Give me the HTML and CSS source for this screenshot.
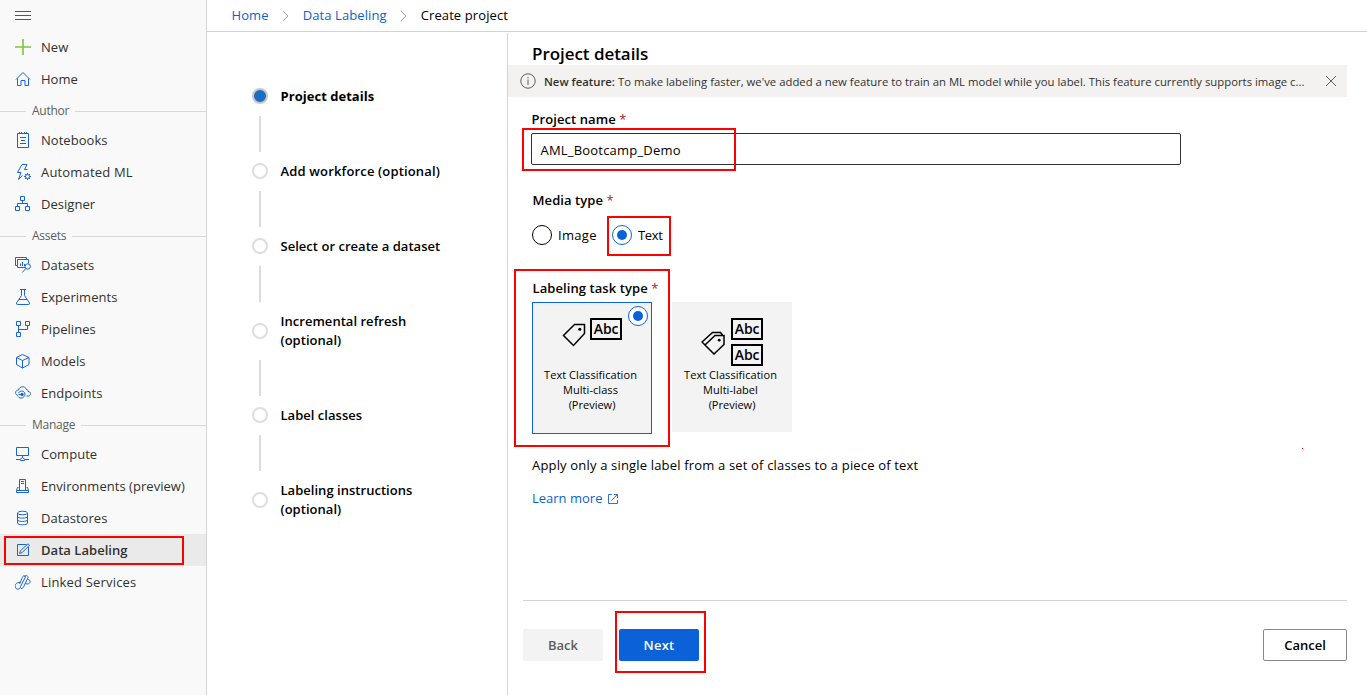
FILE: index.html
```html
<!DOCTYPE html>
<html lang="en">
<head>
<meta charset="utf-8">
<title>Create project</title>
<link rel="stylesheet" href="styles.css">
</head>
<body>
<div class="app">
  <nav class="sidebar">
    <div class="nav-item menu"><svg class="icon" viewBox="0 0 16 16"><path d="M0 3.500h16M0 7.500h16M0 11.500h16"/></svg></div>
    <a class="nav-item"><svg class="icon plus" viewBox="0 0 16 16"><path d="M8 0v16M0 8h16"/></svg><span>New</span></a>
    <a class="nav-item"><svg class="icon" viewBox="0 0 16 16"><path d="M1 8.500 8 1.500l7 7M2.500 7.500v7h3.500v-5h4v5h3.500v-7"/></svg><span>Home</span></a>
    <div class="nav-section"><span>Author</span></div>
    <a class="nav-item"><svg class="icon" viewBox="0 0 16 16"><path d="M2.500 1.500h11v14h-11zM4.500 0v2M6.500 0v2M9.500 0v2M11.500 0v2M5 5.500h6M6 8.500h4M5 11.500h6"/></svg><span>Notebooks</span></a>
    <a class="nav-item"><svg class="icon" viewBox="0 0 16 16"><path d="M7 .5h5L9.500 5.500h3M7 .5 2.500 8.500H6L3.500 15.500l4-4"/><circle cx="12.500" cy="12.500" r="2"/><path d="M12.500 9v1.500M12.500 14.500V16M9 12.500h1.500M14.500 12.500H16M10 10l1 1M14 14l1 1M15 10l-1 1M11 14l-1 1"/></svg><span class="wide">Automated ML</span></a>
    <a class="nav-item"><svg class="icon" viewBox="0 0 16 16"><path d="M5.500.5h4v4h-4zM.5 10.500h4v4h-4zM10.500 10.500h4v4h-4zM7.500 4.500v3M2.500 10.500v-3h10v3"/></svg><span>Designer</span></a>
    <div class="nav-section"><span>Assets</span></div>
    <a class="nav-item"><svg class="icon" viewBox="0 0 16 16"><path d="M2.500 8.500h-2v-8h11v2M10 10.500H2.500v-8h11v4M5.500 9V6.500M7.500 9V5M9.500 9V7"/><circle cx="12.700" cy="9.500" r="2.700"/><path d="m10.800 11.500-3.500 4"/></svg><span>Datasets</span></a>
    <a class="nav-item"><svg class="icon" viewBox="0 0 16 16"><path d="M5 .5h6M6.500.5v6l-5 7.500q-.5 1.500 1 1.500h11q1.500 0 1-1.500l-5-7.500v-6M4 10.500h8"/></svg><span>Experiments</span></a>
    <a class="nav-item"><svg class="icon" viewBox="0 0 16 16"><path d="M1.500.5h4v4h-4zM10.500.5h4v4h-4zM1.500 11.500h4v4h-4zM3.500 4.500v7M3.500 8.500h9v-4"/></svg><span>Pipelines</span></a>
    <a class="nav-item"><svg class="icon" viewBox="0 0 16 16"><path d="M7.500 1.500 14 4.500v7l-6.500 3.500L1.500 11.500v-7zM1.500 4.500l6 3 6.500-3M7.500 7.500V15"/></svg><span>Models</span></a>
    <a class="nav-item"><svg class="icon" viewBox="0 0 16 16"><path d="M3 10.500C-.5 9.500 0 5 3.500 5 4.500 1 10 .5 11.500 4.500c1 0 1.500.5 1.500 2 3 0 3.500 4 .5 4.500h-2M3.500 8C5 5 9.500 5.500 10 9c0 4-5 5.500-7 2.500M3.500 9.500h2"/><circle class="solid" cx="7" cy="9.500" r="1.700"/></svg><span>Endpoints</span></a>
    <div class="nav-section"><span>Manage</span></div>
    <a class="nav-item"><svg class="icon" viewBox="0 0 16 16"><path d="M1.500 1.500h12v8h-12zM7.500 9.500v2M1 13.500h4M10 13.500h4M7.500 11.500l2.500 2-.5 1h-4l-.5-1z"/></svg><span>Compute</span></a>
    <a class="nav-item"><svg class="icon" viewBox="0 0 16 16"><path d="M4.500 12V1.500h6V12M6 3.500h3M6 5.500h3M3.500 9.500h-1l-1 3v2h12v-2l-1-3h-1M1.500 12.500h12"/></svg><span>Environments (preview)</span></a>
    <a class="nav-item"><svg class="icon" viewBox="0 0 16 16"><ellipse cx="7.500" cy="3" rx="5" ry="1.800"/><path d="M2.500 3v10c0 2.400 10 2.400 10 0V3M2.500 6.500c0 2.200 10 2.200 10 0M2.500 9.800c0 2.200 10 2.200 10 0"/></svg><span>Datastores</span></a>
    <a class="nav-item selected"><svg class="icon" viewBox="0 0 16 16"><path d="M11.500 2.500H2.500v11h11V5M4.500 11.500l1-2.800L13 1.800l1.500 1.400L7.300 10.500z"/></svg><span>Data Labeling</span></a>
    <a class="nav-item"><svg class="icon" viewBox="0 0 16 16"><path d="M5.500 8.500C1 7.500-1.500 12.500 1.500 14.800c2.500 1.200 4-.3 4-2.300l5-9.500C9.500.5 7.500 2 7 4.500L4.500 10M6 14.500c2 0 2.500-1.500 3-2.500l4-8.500C12.500.5 10 1 9.500 3M13 5.500c3 .5 3 4-.5 4.500l-2-.5"/></svg><span class="wide">Linked Services</span></a>
  </nav>

  <div class="page">
    <header class="breadcrumb">
      <a class="crumb-home">Home</a>
      <svg class="chevron" viewBox="0 0 8 12"><path d="m1 1 5 5-5 5"/></svg>
      <a class="crumb-label">Data Labeling</a>
      <svg class="chevron" viewBox="0 0 8 12"><path d="m1 1 5 5-5 5"/></svg>
      <span class="current">Create project</span>
    </header>
    <div class="columns">
      <aside class="steps">
        <div class="step active"><i class="dot"></i><span>Project details</span></div>
        <div class="line"></div>
        <div class="step"><i class="dot"></i><span class="wide">Add workforce (optional)</span></div>
        <div class="line"></div>
        <div class="step"><i class="dot"></i><span>Select or create a dataset</span></div>
        <div class="line"></div>
        <div class="step two-line"><i class="dot"></i><span>Incremental refresh<br>(optional)</span></div>
        <div class="line"></div>
        <div class="step"><i class="dot"></i><span>Label classes</span></div>
        <div class="line"></div>
        <div class="step two-line"><i class="dot"></i><span>Labeling instructions<br>(optional)</span></div>
      </aside>

      <main class="details">
        <h1>Project details</h1>
        <div class="banner">
          <svg class="info" viewBox="0 0 16 16"><circle cx="8" cy="8" r="7.200"/><path d="M8 6.500V12M8 4v1.300"/></svg>
          <p><b>New feature:</b> To make labeling faster, we've added a new feature to train an ML model while you label. This feature currently supports image c...</p>
          <svg class="close" viewBox="0 0 12 12"><path d="m1 1 10 10M11 1 1 11"/></svg>
        </div>
        <div class="form">
          <label class="label name-label">Project name <em>*</em></label>
          <div class="input">AML_Bootcamp_Demo</div>
          <div class="label media-label">Media type <em>*</em></div>
          <div class="radios">
            <div class="radio"><i class="ring"></i><span class="t-image">Image</span></div>
            <div class="radio"><i class="ring on"></i><span class="t-text">Text</span></div>
          </div>
          <div class="label task-label">Labeling task type <em>*</em></div>
          <div class="cards">
            <div class="card chosen">
              <i class="ring on corner"></i>
              <div class="art">
                <svg class="tag" viewBox="0 0 24 24"><path d="M12.500 1.500h10v9L11.500 22.500l-10-10z"/><circle class="hole" cx="17.800" cy="6.200" r="1.500"/></svg>
                <div class="abcs"><span class="abc">Abc</span></div>
              </div>
              <p><span class="caption">Text Classification</span><br><span class="caption">Multi-class</span><br>(Preview)</p>
            </div>
            <div class="card">
              <div class="art multi">
                <svg class="tag" viewBox="0 0 24 24"><path d="M14 4.500h9v9l-10 9.500-9-9zM4 14l-3-3L11.500 1.500h8l2 2.500"/><circle class="hole" cx="18.200" cy="9.200" r="1.400"/></svg>
                <div class="abcs"><span class="abc">Abc</span><span class="abc">Abc</span></div>
              </div>
              <p><span class="caption">Text Classification</span><br><span class="caption">Multi-label</span><br>(Preview)</p>
            </div>
          </div>
          <p class="hint">Apply only a single label from a set of classes to a piece of text</p>
          <a class="learn"><span>Learn more</span><svg viewBox="0 0 12 12"><path d="M5 1.500H1.500v9h9V7M7 1.500h3.500V5M10.500 1.500l-6 6"/></svg></a>
        </div>
        <footer class="actions">
          <button class="btn back">Back</button>
          <button class="btn next">Next</button>
          <button class="btn cancel">Cancel</button>
        </footer>
      </main>
    </div>
  </div>

  <i class="mark mark-nav"></i>
  <i class="mark mark-name"></i>
  <i class="mark mark-text"></i>
  <i class="mark mark-task"></i>
  <i class="mark mark-next"></i>
  <i class="speck"></i>
</div>
</body>
</html>
```
FILE: styles.css
```css
* { box-sizing: border-box; }
body { margin: 0; background: #fff; color: #000; font: 13px/19px "Open Sans", "Noto Sans", sans-serif; overflow: hidden; }
h1, p { margin: 0; }
svg { display: block; flex: none; fill: none; stroke-width: 1; }
i, em { font-style: normal; }

.app { position: relative; display: flex; width: 1367px; height: 695px; }

.sidebar { width: 207px; flex: none; background: #f9f9f9; border-right: 1px solid #d4d4d4; color: #323130; }
.nav-item { display: flex; align-items: center; gap: 10px; height: 32px; padding-left: 15px; letter-spacing: .04px; white-space: nowrap; }
.nav-item .wide { letter-spacing: .18px; }
.nav-item.menu { height: 31px; }
.nav-item.selected { background: #eaeaea; font-weight: 600; }
.icon { width: 16px; height: 16px; stroke: #1565d8; }
.menu .icon { stroke: #1e5fae; }
.plus { stroke: #7fc241; stroke-width: 1.6; }
.icon .solid { fill: #1565d8; stroke: none; }
.nav-section { display: flex; align-items: center; height: 29px; padding-top: 3px; gap: 6px; color: #605e5c; font-size: 12px; letter-spacing: -.25px; }
.nav-section span { margin-top: -1px; line-height: 18px; }
.nav-section::before { content: ""; width: 26px; height: 1px; background: #d8d8d8; }
.nav-section::after { content: ""; flex: 1; height: 1px; background: #d8d8d8; }

.page { flex: 1; display: flex; flex-direction: column; min-width: 0; }
.breadcrumb { display: flex; align-items: center; height: 32px; padding-left: 24.500px; border-bottom: 1px solid #d4d4d4; color: #0b5fd0; letter-spacing: .1px; white-space: nowrap; }
.chevron { width: 8px; height: 12px; margin: 0 13px; stroke: #a19f9d; }
.current { color: #000; }
.columns { flex: 1; display: flex; padding-top: 1px; }

.steps { width: 301px; flex: none; padding: 54px 0 0 45px; border-right: 1px solid #d4d4d4; font-weight: 600; letter-spacing: .03px; }
.step { display: flex; align-items: flex-start; gap: 12.500px; }
.step .wide { letter-spacing: .16px; }
.step.active { font-weight: 700; }
.dot { width: 16px; height: 16px; flex: none; margin-top: 1px; border: 2px solid #dedede; border-radius: 50%; background: #fff; }
.two-line .dot { margin-top: 11px; }
.active .dot { background: #1a6fc0; border-color: #c8c8c8; }
.line { width: 2px; height: 36px; margin: 10px 0 10px 7px; background: #dcdcdc; }

.details { flex: 1; display: flex; flex-direction: column; min-width: 0; padding-right: 20px; }
h1 { height: 32px; padding-left: 24px; font-size: 17px; line-height: 41px; font-weight: 600; letter-spacing: -.05px; }
.banner { display: flex; align-items: center; height: 32px; padding: 0 10px 0 12px; background: #f3f2f1; color: #323130; font-size: 11.300px; white-space: nowrap; }
.banner p { flex: 1; padding: 1px 0 0 8px; letter-spacing: .015px; }
.banner b { font-weight: 600; }
.info { width: 16px; height: 16px; stroke: #605e5c; }
.close { width: 12px; height: 12px; stroke: #605e5c; }

.form { flex: 1; padding: 12px 0 0 24px; }
.label { padding-left: .5px; font-weight: 600; line-height: 20px; letter-spacing: .08px; white-space: nowrap; }
.label em { color: #a4262c; font-weight: 400; }
.name-label { display: block; margin-left: -1px; }
.input { width: 650px; height: 32px; margin: 4px 0 0 -1px; padding-left: 8.500px; border: 1px solid #323130; border-radius: 2px; line-height: 32px; letter-spacing: .2px; }
.media-label { margin-top: 25px; }
.radios { display: flex; gap: 15px; height: 20px; margin-top: 15px; }
.radio { display: flex; align-items: center; gap: 6px; white-space: nowrap; }
.ring { display: flex; align-items: center; justify-content: center; width: 20px; height: 20px; flex: none; border: 1px solid #000; border-radius: 50%; background: #fff; }
.ring.on { border-color: #0b62d8; }
.ring.on::after { content: ""; width: 10px; height: 10px; border-radius: 50%; background: #0b62d8; }
.t-image { width: 39px; letter-spacing: .3px; }
.t-text { letter-spacing: -.3px; }
.task-label { margin-top: 33px; }
.cards { display: flex; align-items: flex-start; gap: 20px; height: 132px; margin-top: 4px; }
.card { position: relative; width: 120px; height: 130px; background: #f3f3f3; padding-top: 16px; text-align: center; font-size: 11px; line-height: 15px; white-space: nowrap; }
.card.chosen { height: 132px; border: 1px solid #0b62d8; padding-top: 15px; }
.caption { padding-right: 3px; letter-spacing: .06px; }
.corner { position: absolute; top: 3px; right: 3px; }
.art { display: flex; align-items: flex-start; gap: 3px; height: 49px; padding-left: 30px; }
.card.chosen .art { padding-left: 29px; gap: 4px; }
.card.chosen .tag { margin-top: 5px; }
.multi .tag { margin-top: 13px; }
.art.multi { gap: 6px; padding-left: 29px; }
.tag { width: 24px; height: 24px; stroke: #000; stroke-width: 1.500; }
.hole { fill: #000; stroke: none; }
.abcs { display: flex; flex-direction: column; gap: 4px; }
.abc { display: block; width: 32px; height: 22px; border: 2px solid #000; background: #f3f3f3; font-size: 14px; line-height: 18px; font-weight: 600; letter-spacing: -.2px; }
.hint { margin-top: 22px; letter-spacing: .17px; white-space: nowrap; }
.learn { display: flex; align-items: center; gap: 5px; margin-top: 14px; color: #0b5fd0; }
.learn svg { width: 12px; height: 12px; stroke: #3470d8; }

.actions { display: flex; height: 95px; margin-left: 15px; padding-top: 28px; border-top: 1px solid #d4d4d4; }
.btn { width: 80px; height: 32px; padding: 0; border: 0; border-radius: 2px; font: 600 13px/32px "Open Sans", "Noto Sans", sans-serif; }
.back { background: #f3f3f3; color: #605e5c; }
.next { margin-left: 16px; background: #0b62d8; color: #fff; letter-spacing: .2px; }
.cancel { width: 84px; margin-left: auto; border: 1px solid #8a8886; background: #fff; color: #000; line-height: 30px; }

/* Callout rectangles drawn over the page */
.mark { position: absolute; border: 2px solid #f00; }
.mark-nav { left: 4px; top: 536px; width: 180px; height: 29px; }
.mark-name { left: 522px; top: 128px; width: 214px; height: 43px; }
.mark-text { left: 607px; top: 216px; width: 64px; height: 40px; }
.mark-task { left: 514px; top: 269px; width: 156px; height: 178px; }
.mark-next { left: 615px; top: 611px; width: 91px; height: 62px; }
.speck { position: absolute; left: 1302px; top: 448px; width: 1px; height: 1px; background: #f00; }
```
